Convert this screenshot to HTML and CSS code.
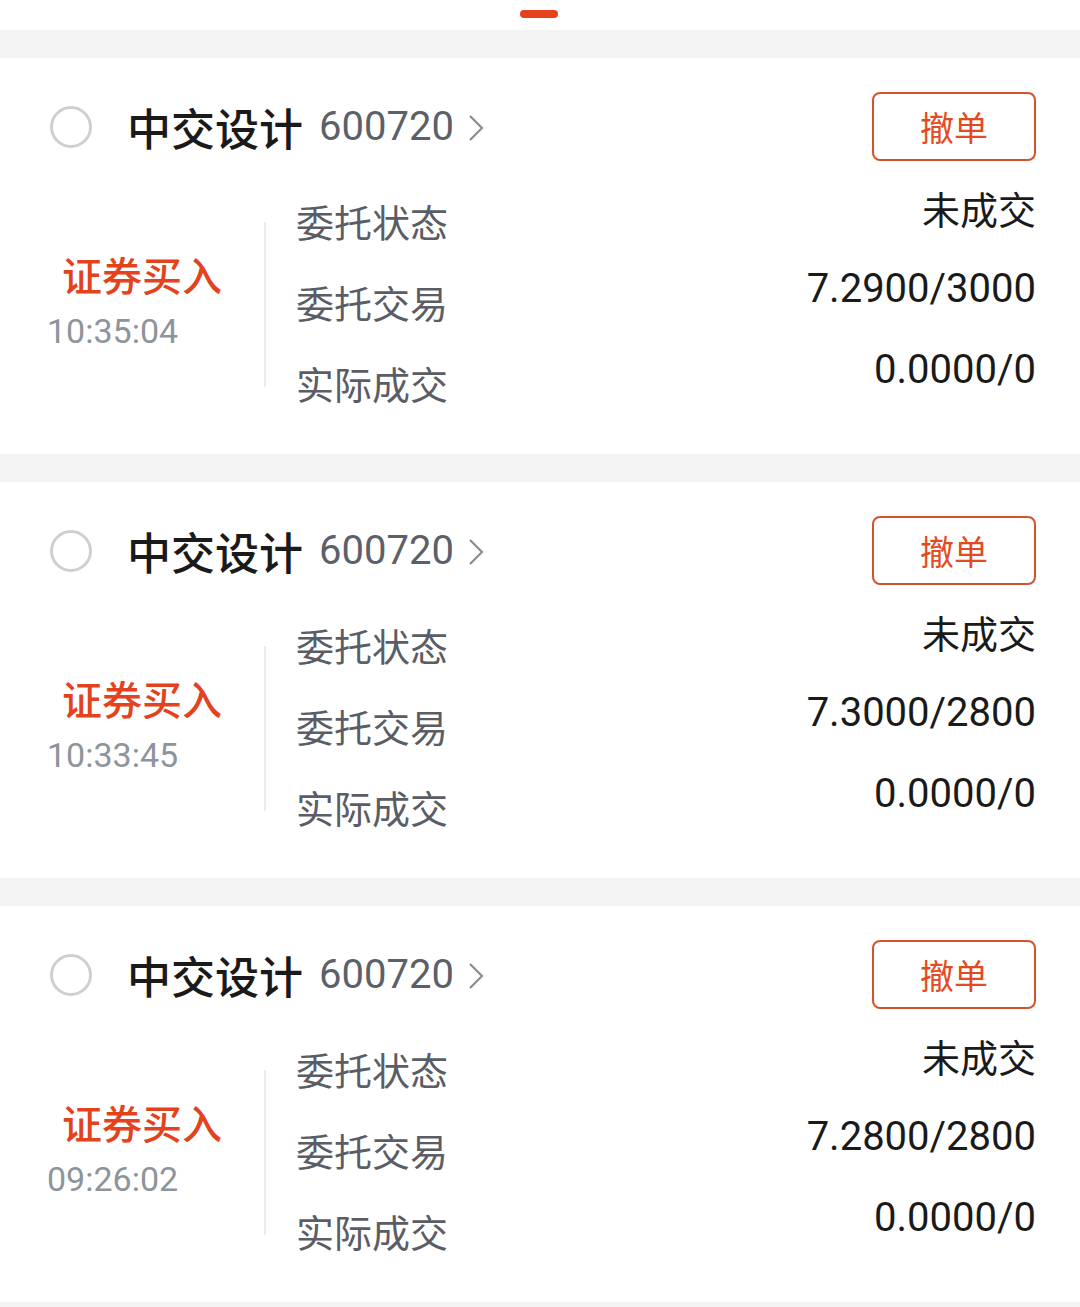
FILE: index.html
```html
<!DOCTYPE html>
<html lang="zh-CN">
<head>
    <meta charset="UTF-8">
    <meta name="viewport" content="width=device-width, initial-scale=1.0">
    <title>撤单</title>
    <link rel="stylesheet" href="styles.css">
</head>
<body>
    <div class="top">
        <span class="pill"></span>
    </div>

    <div class="list">
        <div class="card">
            <div class="head">
                <span class="radio"></span>
                <span class="name">中交设计</span>
                <span class="code">600720</span>
                <svg class="arrow" width="16" height="28" viewBox="0 0 16 28"><path d="M2 2 L14 14 L2 26" fill="none" stroke="#8a8d93" stroke-width="2.2"/></svg>
                <button class="cancel">撤单</button>
            </div>
            <div class="body">
                <div class="side">
                    <div class="type">证券买入</div>
                    <div class="time">10:35:04</div>
                </div>
                <div class="divider"></div>
                <div class="labels">
                    <div>委托状态</div>
                    <div>委托交易</div>
                    <div>实际成交</div>
                </div>
                <div class="values">
                    <div>未成交</div>
                    <div class="num">7.2900/3000</div>
                    <div class="num">0.0000/0</div>
                </div>
            </div>
        </div>

        <div class="card">
            <div class="head">
                <span class="radio"></span>
                <span class="name">中交设计</span>
                <span class="code">600720</span>
                <svg class="arrow" width="16" height="28" viewBox="0 0 16 28"><path d="M2 2 L14 14 L2 26" fill="none" stroke="#8a8d93" stroke-width="2.2"/></svg>
                <button class="cancel">撤单</button>
            </div>
            <div class="body">
                <div class="side">
                    <div class="type">证券买入</div>
                    <div class="time">10:33:45</div>
                </div>
                <div class="divider"></div>
                <div class="labels">
                    <div>委托状态</div>
                    <div>委托交易</div>
                    <div>实际成交</div>
                </div>
                <div class="values">
                    <div>未成交</div>
                    <div class="num">7.3000/2800</div>
                    <div class="num">0.0000/0</div>
                </div>
            </div>
        </div>

        <div class="card">
            <div class="head">
                <span class="radio"></span>
                <span class="name">中交设计</span>
                <span class="code">600720</span>
                <svg class="arrow" width="16" height="28" viewBox="0 0 16 28"><path d="M2 2 L14 14 L2 26" fill="none" stroke="#8a8d93" stroke-width="2.2"/></svg>
                <button class="cancel">撤单</button>
            </div>
            <div class="body">
                <div class="side">
                    <div class="type">证券买入</div>
                    <div class="time">09:26:02</div>
                </div>
                <div class="divider"></div>
                <div class="labels">
                    <div>委托状态</div>
                    <div>委托交易</div>
                    <div>实际成交</div>
                </div>
                <div class="values">
                    <div>未成交</div>
                    <div class="num">7.2800/2800</div>
                    <div class="num">0.0000/0</div>
                </div>
            </div>
        </div>
    </div>
</body>
</html>
```

FILE: styles.css
```css
body {
    margin: 0;
    padding: 0;
    background-color: #f4f4f4;
    font-family: Roboto, "Noto Sans CJK SC", sans-serif;
    color: #1a1a1a;
}
.top {
    height: 30px;
    background-color: #fff;
    display: flex;
    justify-content: center;
    padding-top: 10px;
    box-sizing: border-box;
}
.pill {
    width: 38px;
    height: 8px;
    border-radius: 4px;
    background-color: #e8401c;
    margin-left: -2px;
}
.list {
    padding-top: 28px;
    display: flex;
    flex-direction: column;
    gap: 28px;
}
.card {
    background-color: #fff;
    height: 396px;
    box-sizing: border-box;
    padding: 34px 44px 0 0;
    display: flex;
    flex-direction: column;
}
.head {
    display: flex;
    align-items: center;
    height: 69px;
    padding-left: 50px;
}
.radio {
    width: 42px;
    height: 42px;
    box-sizing: border-box;
    border: 3px solid #cfcfcf;
    border-radius: 50%;
    margin-right: 35px;
    margin-top: 1px;
}
.name {
    font-family: "Noto Sans CJK SC", sans-serif;
    font-size: 44px;
    font-weight: 500;
    color: #1a1a1a;
    margin-right: 16px;
}
.code {
    font-size: 40px;
    color: #5d6068;
    margin-right: 14px;
}
.arrow {
    margin-top: 2px;
}
.cancel {
    margin-left: auto;
    width: 164px;
    height: 69px;
    border: 2px solid #d4532f;
    border-radius: 8px;
    background-color: #fff;
    color: #e24b22;
    font-family: "Noto Sans CJK SC", sans-serif;
    font-size: 34px;
    padding: 0;
}
.body {
    flex: 1;
    display: flex;
    align-items: center;
    padding-bottom: 12px;
}
.side {
    width: 264px;
    display: flex;
    flex-direction: column;
}
.type {
    font-family: "Noto Sans CJK SC", sans-serif;
    font-size: 40px;
    font-weight: 500;
    color: #e2431d;
    line-height: 60px;
    padding-left: 62px;
}
.time {
    font-size: 34px;
    color: #8e949c;
    line-height: 54px;
    padding-left: 47px;
    margin-bottom: 2px;
}
.divider {
    width: 2px;
    height: 165px;
    background-color: #ebebef;
    margin-right: 30px;
    margin-top: 6px;
}
.labels {
    font-family: "Noto Sans CJK SC", sans-serif;
    font-size: 38px;
    line-height: 81px;
    color: #5a5d65;
}
.values {
    flex: 1;
    text-align: right;
    font-family: "Noto Sans CJK SC", sans-serif;
    font-size: 38px;
    line-height: 81px;
    color: #1a1a1a;
    margin-bottom: 26px;
}
.num {
    font-family: Roboto, sans-serif;
    font-size: 40px;
}
```
